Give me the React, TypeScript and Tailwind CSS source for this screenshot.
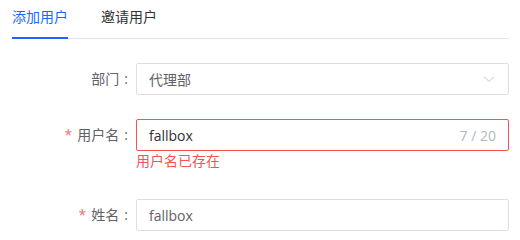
import React from "react";

const font = { fontFamily: '"Open Sans", "Noto Sans CJK SC", sans-serif' };

function Label({ text, required }: { text: string; required?: boolean }) {
  return (
    <div className="w-[124px] pr-2 text-right text-[14px] text-[#606266] leading-8 shrink-0">
      {required && <span className="text-[#f56c6c] mr-[5px]">*</span>}
      {text}
      <span className="ml-[5px]">:</span>
    </div>
  );
}

export default function App() {
  return (
    <div className="w-[520px] h-[240px] bg-white pl-3 pr-[11px]" style={font}>
      <div className="flex border-b border-[#e4e7ed] h-[39px]">
        <div className="relative h-[38px] pb-[5px] flex items-center text-[14px] text-[#1a66ff]">
          添加用户
          <div className="absolute left-0 right-0 -bottom-px h-[2px] bg-[#1a66ff]" />
        </div>
        <div className="h-[38px] pb-[5px] flex items-center text-[14px] text-[#303133] ml-[33px]">邀请用户</div>
      </div>

      <div className="mt-6 flex items-center">
        <Label text="部门" />
        <div className="flex-1 h-8 border border-[#dcdfe6] rounded-[2px] flex items-center justify-between px-3">
          <span className="text-[14px] text-[#606266]">代理部</span>
          <svg width="12" height="8" viewBox="0 0 12 8" className="mr-[1px]">
            <polyline points="1,1.5 6,6.5 11,1.5" fill="none" stroke="#c0c4cc" strokeWidth="1" />
          </svg>
        </div>
      </div>

      <div className="mt-6 flex items-start">
        <Label text="用户名" required />
        <div className="flex-1">
          <div className="h-8 border border-[#f55353] rounded-[2px] flex items-center justify-between pl-3 pr-3">
            <span className="text-[14px] text-[#303133]">fallbox</span>
            <span className="text-[14px] text-[#b4b7bd]">7 / 20</span>
          </div>
          <div className="text-[14px] leading-5 text-[#f55353]">用户名已存在</div>
        </div>
      </div>

      <div className="mt-7 flex items-center">
        <Label text="姓名" required />
        <div className="flex-1 h-8 border border-[#dcdfe6] rounded-[2px] flex items-center px-3">
          <span className="text-[14px] text-[#606266]">fallbox</span>
        </div>
      </div>
    </div>
  );
}
